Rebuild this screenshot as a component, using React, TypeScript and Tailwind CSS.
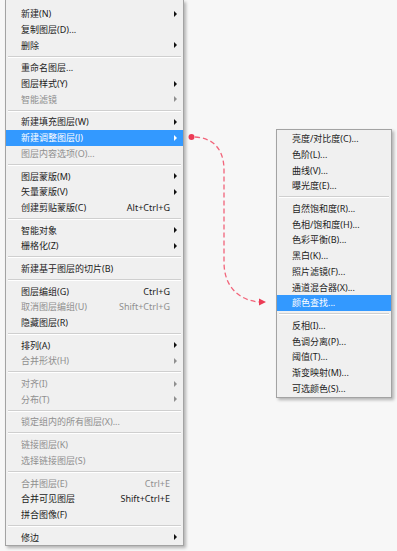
import React from "react";

type Item = {
    label?: string;
    sep?: boolean;
    disabled?: boolean;
    sub?: boolean;
    shortcut?: string;
    active?: boolean;
};

const mainItems: Item[] = [
    { label: "新建(N)", sub: true },
    { label: "复制图层(D)..." },
    { label: "删除", sub: true },
    { sep: true },
    { label: "重命名图层..." },
    { label: "图层样式(Y)", sub: true },
    { label: "智能滤镜", sub: true, disabled: true },
    { sep: true },
    { label: "新建填充图层(W)", sub: true },
    { label: "新建调整图层(J)", sub: true, active: true },
    { label: "图层内容选项(O)...", disabled: true },
    { sep: true },
    { label: "图层蒙版(M)", sub: true },
    { label: "矢量蒙版(V)", sub: true },
    { label: "创建剪贴蒙版(C)", shortcut: "Alt+Ctrl+G" },
    { sep: true },
    { label: "智能对象", sub: true },
    { label: "栅格化(Z)", sub: true },
    { sep: true },
    { label: "新建基于图层的切片(B)" },
    { sep: true },
    { label: "图层编组(G)", shortcut: "Ctrl+G" },
    { label: "取消图层编组(U)", shortcut: "Shift+Ctrl+G", disabled: true },
    { label: "隐藏图层(R)" },
    { sep: true },
    { label: "排列(A)", sub: true },
    { label: "合并形状(H)", sub: true, disabled: true },
    { sep: true },
    { label: "对齐(I)", sub: true, disabled: true },
    { label: "分布(T)", sub: true, disabled: true },
    { sep: true },
    { label: "锁定组内的所有图层(X)...", disabled: true },
    { sep: true },
    { label: "链接图层(K)", disabled: true },
    { label: "选择链接图层(S)", disabled: true },
    { sep: true },
    { label: "合并图层(E)", shortcut: "Ctrl+E", disabled: true },
    { label: "合并可见图层", shortcut: "Shift+Ctrl+E" },
    { label: "拼合图像(F)" },
    { sep: true },
    { label: "修边", sub: true },
];

const subItems: Item[] = [
    { label: "亮度/对比度(C)..." },
    { label: "色阶(L)..." },
    { label: "曲线(V)..." },
    { label: "曝光度(E)..." },
    { sep: true },
    { label: "自然饱和度(R)..." },
    { label: "色相/饱和度(H)..." },
    { label: "色彩平衡(B)..." },
    { label: "黑白(K)..." },
    { label: "照片滤镜(F)..." },
    { label: "通道混合器(X)..." },
    { label: "颜色查找...", active: true },
    { sep: true },
    { label: "反相(I)..." },
    { label: "色调分离(P)..." },
    { label: "阈值(T)..." },
    { label: "渐变映射(M)..." },
    { label: "可选颜色(S)..." },
];

const Arrow = ({ color }: { color: string }) => (
    <svg width="3" height="6" viewBox="0 0 3 6" className="ml-[4px]">
        <path d="M0 0 L3 3 L0 6 Z" fill={color} />
    </svg>
);

const MenuRows = ({ items, slot }: { items: Item[]; slot: boolean }) => (
    <>
        {items.map((it, idx) => {
            if (it.sep) {
                return (
                    <div
                        key={idx}
                        className="h-[7px] flex flex-col justify-center px-[2px]"
                    >
                        <div className="h-px bg-[#cfcfcf]" />
                        <div className="h-px bg-white" />
                    </div>
                );
            }
            const color = it.active
                ? "text-white"
                : it.disabled
                ? "text-[#8f8f8f]"
                : "text-[#1c1c1c]";
            return (
                <div
                    key={idx}
                    className={`h-[15.7px] flex items-center pl-[15px] text-[9px] leading-none whitespace-nowrap ${color} ${
                        it.active ? "bg-[#3399ff]" : ""
                    }`}
                >
                    <span className="flex-1">{it.label}</span>
                    {it.shortcut && <span>{it.shortcut}</span>}
                    {slot && (
                        <span className="w-[13px] flex items-center">
                            {it.sub && (
                                <Arrow
                                    color={
                                        it.active
                                            ? "#ffffff"
                                            : it.disabled
                                            ? "#8f8f8f"
                                            : "#111111"
                                    }
                                />
                            )}
                        </span>
                    )}
                </div>
            );
        })}
    </>
);

export default function App() {
    return (
        <div
            className="relative w-[397px] h-[551px] overflow-hidden bg-[#f7f7f7]"
            style={{ fontFamily: '"Noto Sans", "Noto Sans CJK SC", sans-serif' }}
        >
            <div className="ml-[5px] w-[179px] pt-[6px] border-x border-b border-[#a3a3a3] bg-[#f0f0f0] shadow-[2px_2px_3px_rgba(0,0,0,0.28)]">
                <MenuRows items={mainItems} slot={true} />
            </div>

            <div className="absolute left-[276px] top-[129px] w-[116px] py-[1px] border border-[#a3a3a3] bg-[#f0f0f0] shadow-[2px_2px_3px_rgba(0,0,0,0.28)]">
                <MenuRows items={subItems} slot={false} />
            </div>

            <svg
                className="absolute left-0 top-0 pointer-events-none"
                width="397"
                height="551"
                viewBox="0 0 397 551"
            >
                <circle cx="191.5" cy="137" r="3" fill="#ec3b55" />
                <path
                    d="M195 137 C214 138 224 150 224 170 L224 262 C224 286 238 300 259 302"
                    fill="none"
                    stroke="#f2647a"
                    strokeWidth="1.3"
                    strokeDasharray="5 3"
                />
                <path d="M259 298.5 L266 302 L259 305.5 Z" fill="#ec3b55" />
            </svg>
        </div>
    );
}
